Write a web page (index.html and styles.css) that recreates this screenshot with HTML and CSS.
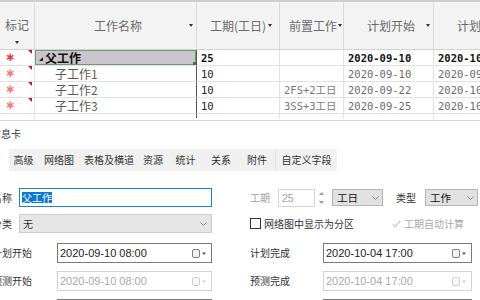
FILE: index.html
```html
<!DOCTYPE html>
<html lang="zh-CN">
<head>
<meta charset="utf-8">
<title>工作信息卡</title>
<link rel="stylesheet" href="styles.css">
</head>
<body>
<div class="app">
  <div class="topband"></div>
  <div class="grid">
    <div class="hrow">
      <div class="hc hc-mark"><span class="ht">标记</span><i class="arr"></i></div>
      <div class="hc hc-c"><span class="ht">工作名称</span><i class="arr"></i></div>
      <div class="hc hc-l hc-dur"><span class="ht">工期(工日)</span><i class="arr"></i></div>
      <div class="hc hc-l hc-pre"><span class="ht">前置工作</span><i class="arr"></i></div>
      <div class="hc hc-c"><span class="ht">计划开始</span><i class="arr"></i></div>
      <div class="hc hc-c"><span class="ht">计划完成</span><i class="arr"></i></div>
    </div>
    <div class="row parent">
      <div class="c mark"><span class="star">∗</span><i class="flag"></i></div>
      <div class="c name selected"><i class="twisty"></i><span>父工作</span><i class="handle"></i></div>
      <div class="c num dur">25</div>
      <div class="c num pre"></div>
      <div class="c num">2020-09-10</div>
      <div class="c num">2020-10-04</div>
    </div>
    <div class="row child">
      <div class="c mark"><span class="star">∗</span><i class="flag"></i></div>
      <div class="c name"><span>子工作1</span></div>
      <div class="c num dur">10</div>
      <div class="c num pre"></div>
      <div class="c num">2020-09-10</div>
      <div class="c num">2020-09-19</div>
    </div>
    <div class="row child">
      <div class="c mark"><span class="star">∗</span><i class="flag"></i></div>
      <div class="c name"><span>子工作2</span></div>
      <div class="c num dur">10</div>
      <div class="c num pre">2FS+2工日</div>
      <div class="c num">2020-09-22</div>
      <div class="c num">2020-10-01</div>
    </div>
    <div class="row child">
      <div class="c mark"><span class="star">∗</span><i class="flag"></i></div>
      <div class="c name"><span>子工作3</span></div>
      <div class="c num dur">10</div>
      <div class="c num pre">3SS+3工日</div>
      <div class="c num">2020-09-25</div>
      <div class="c num">2020-10-04</div>
    </div>
    <div class="row stub">
      <div class="c"></div><div class="c name"></div><div class="c"></div><div class="c"></div><div class="c"></div><div class="c"></div>
    </div>
  </div>

  <div class="panel">
    <div class="inner">
      <div class="ptitle">信息卡</div>
      <div class="tabs">
        <span class="tab">高级</span>
        <span class="tab">网络图</span>
        <span class="tab">表格及横道</span>
        <span class="tab">资源</span>
        <span class="tab">统计</span>
        <span class="tab">关系</span>
        <span class="tab">附件</span>
        <span class="tab">自定义字段</span>
      </div>

      <div class="form">
        <div class="frow r1">
          <div class="lf">
            <span class="lbl lbl-s">名称</span>
            <div class="inp focus w-l"><span class="hl">父工作</span></div>
          </div>
          <div class="rt">
            <span class="lbl lbl-dis lbl-dur">工期</span>
            <div class="spin"><span class="spin-val">25</span></div>
            <div class="spinbtn">
              <svg width="5" height="14" viewBox="0 0 5 14"><path d="M0 4 L2.5 1 L5 4 Z" fill="#9a9a9a"/><path d="M0 10 L2.5 13 L5 10 Z" fill="#9a9a9a"/></svg>
            </div>
            <div class="dd dd-unit"><span>工日</span><svg class="chev" width="7" height="4" viewBox="0 0 7 4"><polyline points="0.5,0.5 3.5,3.5 6.5,0.5" fill="none" stroke="#8a8a8a" stroke-width="1"/></svg></div>
            <span class="lbl lbl-type">类型</span>
            <div class="dd dd-type"><span>工作</span><svg class="chev" width="7" height="4" viewBox="0 0 7 4"><polyline points="0.5,0.5 3.5,3.5 6.5,0.5" fill="none" stroke="#8a8a8a" stroke-width="1"/></svg></div>
          </div>
        </div>

        <div class="frow r2">
          <div class="lf">
            <span class="lbl lbl-s">分类</span>
            <div class="inp sel w-l"><span>无</span><svg class="chev" width="7" height="4" viewBox="0 0 7 4"><polyline points="0.5,0.5 3.5,3.5 6.5,0.5" fill="none" stroke="#8a8a8a" stroke-width="1"/></svg></div>
          </div>
          <div class="rt">
            <span class="cbox"></span>
            <span class="cb-text">网络图中显示为分区</span>
            <svg class="tick" width="9" height="8" viewBox="0 0 9 8"><polyline points="0.8,4.2 3.3,6.8 8.2,0.8" fill="none" stroke="#c4c4c4" stroke-width="1.1"/></svg>
            <span class="cb-text dis">工期自动计算</span>
          </div>
        </div>

        <div class="frow r3">
          <div class="lf">
            <span class="lbl lbl-m">计划开始</span>
            <div class="inp date w-m"><span class="dval">2020-09-10 08:00</span><svg class="cal" width="15" height="9" viewBox="0 0 15 9"><rect x="0.5" y="0.5" width="7" height="8" rx="1.5" fill="#f2f2f2" stroke="#7d7d7d"/><path d="M10 3.5 L14 3.5 L12 6 Z" fill="#555"/></svg></div>
          </div>
          <div class="rt">
            <span class="lbl lbl-r">计划完成</span>
            <div class="inp date w-r"><span class="dval">2020-10-04 17:00</span><svg class="cal" width="15" height="9" viewBox="0 0 15 9"><rect x="0.5" y="0.5" width="7" height="8" rx="1.5" fill="#f2f2f2" stroke="#7d7d7d"/><path d="M10 3.5 L14 3.5 L12 6 Z" fill="#555"/></svg></div>
          </div>
        </div>

        <div class="frow r4">
          <div class="lf">
            <span class="lbl lbl-m">预测开始</span>
            <div class="inp date disabled w-m"><span class="dval">2020-09-10 08:00</span><svg class="cal" width="15" height="9" viewBox="0 0 15 9"><rect x="0.5" y="0.5" width="7" height="8" rx="1.5" fill="#f7f7f7" stroke="#d0d0d0"/><path d="M10 3.5 L14 3.5 L12 6 Z" fill="#cfcfcf"/></svg></div>
          </div>
          <div class="rt">
            <span class="lbl lbl-r">预测完成</span>
            <div class="inp date disabled w-r"><span class="dval">2020-10-04 17:00</span><svg class="cal" width="15" height="9" viewBox="0 0 15 9"><rect x="0.5" y="0.5" width="7" height="8" rx="1.5" fill="#f7f7f7" stroke="#d0d0d0"/><path d="M10 3.5 L14 3.5 L12 6 Z" fill="#cfcfcf"/></svg></div>
          </div>
        </div>

        <div class="frow r5">
          <div class="lf">
            <span class="lbl lbl-m">实际开始</span>
            <div class="inp date w-m"></div>
          </div>
          <div class="rt">
            <span class="lbl lbl-r">实际完成</span>
            <div class="inp date w-r"></div>
          </div>
        </div>
      </div>
    </div>
  </div>
</div>
</body>
</html>
```

FILE: styles.css
```css
html, body {
  margin: 0;
  padding: 0;
  background: #ffffff;
}

body {
  font-family: "Noto Sans CJK SC", "Noto Sans", sans-serif;
  color: #333;
}

.app {
  width: 480px;
  height: 300px;
  overflow: hidden;
  background: #ffffff;
}

.topband {
  height: 2px;
  background: #cfcfcf;
}

/* ---------- grid ---------- */
.grid {
  width: 524px;
  height: 118px;
  border-bottom: 1px solid #d6d6d6;
  overflow: hidden;
}

.hrow,
.row {
  display: grid;
  grid-template-columns: 35px 162px 83px 64px 90px 90px;
}

.hc {
  height: 48px;
  box-sizing: border-box;
  background: #f3f3f3;
  border-right: 1px solid #dadada;
  border-bottom: 1px solid #d2d2d2;
  display: flex;
  align-items: center;
  font-size: 12px;
  line-height: 14px;
  color: #6a6a6a;
}

.ht {
  white-space: nowrap;
}

.arr {
  display: block;
  width: 0;
  height: 0;
  border-left: 2.5px solid transparent;
  border-right: 2.5px solid transparent;
  border-top: 3px solid #333;
  flex: none;
}

.hc-mark {
  flex-direction: column;
  justify-content: flex-start;
  padding-top: 16px;
}

.hc-mark .arr {
  margin-top: 9px;
}

.hc-c {
  padding-left: 12px;
}

.hc-c .ht {
  flex: 1;
  text-align: center;
}

.hc-c .arr {
  margin-right: 3px;
}

.hc-dur {
  padding-left: 13px;
}

.hc-dur .arr {
  margin-left: 2px;
}

.hc-pre {
  padding-left: 9px;
}

.hc-pre .arr {
  margin-left: 1px;
}

.c {
  position: relative;
  height: 16px;
  box-sizing: border-box;
  border-right: 1px solid #e2e2e2;
  border-bottom: 1px solid #e2e2e2;
  display: flex;
  align-items: center;
  white-space: nowrap;
  overflow: hidden;
}

.c.name {
  border-right-color: #555555;
  font-size: 12px;
  line-height: 15px;
}

.num {
  font-family: "DejaVu Sans Mono", "Noto Sans CJK SC", monospace;
  font-size: 10.5px;
  padding-left: 4px;
  color: #6a6a6a;
}

.num.dur {
  color: #222;
}

.num.pre {
  color: #7a7a7a;
}

.parent .num {
  font-weight: bold;
  color: #111;
}

.parent .c.name {
  font-weight: bold;
  color: #111;
  padding-left: 4px;
}

.child .c.name {
  color: #5a5a5a;
  padding-left: 20px;
}

.mark {
  padding-left: 5px;
}

.star {
  font-family: "DejaVu Sans", sans-serif;
  font-size: 12px;
  font-weight: bold;
  color: #f07a7a;
  line-height: 15px;
}

.parent .star {
  color: #e23b3b;
}

.flag {
  position: absolute;
  top: 0;
  right: 2px;
  width: 0;
  height: 0;
  border-top: 4px solid #c0102a;
  border-left: 4px solid transparent;
}

.selected {
  background: #c9c5ca;
  box-shadow: inset 0 0 0 1px #6d9f6d;
}

.twisty {
  display: block;
  width: 0;
  height: 0;
  border-right: 4px solid #222;
  border-top: 4px solid transparent;
  margin-right: 2px;
  margin-top: 2px;
}

.handle {
  position: absolute;
  right: 0;
  bottom: 0;
  width: 3px;
  height: 3px;
  background: #3d7a3d;
}

.stub .c {
  height: 4px;
  border-bottom: none;
}

/* ---------- info panel ---------- */
.panel {
  height: 181px;
  overflow: hidden;
}

.inner {
  margin-left: -8px;
  font-size: 10px;
  line-height: 14px;
}

.ptitle {
  padding-top: 6px;
  margin-left: -1px;
  color: #333;
  height: 14px;
}

.tabs {
  margin-top: 8px;
  margin-left: 17px;
  height: 22px;
  width: 328px;
  background: #f0f0f0;
  display: flex;
}

.tab {
  display: flex;
  align-items: center;
  justify-content: center;
  color: #333;
  box-sizing: border-box;
}

.tab:nth-child(1) { width: 29px; }
.tab:nth-child(2) { width: 42px; }
.tab:nth-child(3) { width: 58px; }
.tab:nth-child(4) { width: 30px; }
.tab:nth-child(5) { width: 35px; }
.tab:nth-child(6) { width: 36px; }
.tab:nth-child(7) { width: 37px; border-right: 1px solid #e0e0e0; }
.tab:nth-child(8) { width: 61px; }

.frow {
  display: flex;
  align-items: center;
}

.r1 { margin-top: 17px; height: 19px; }
.r2 { margin-top: 7px; height: 19px; }
.r3 { margin-top: 10px; height: 20px; }
.r4 { margin-top: 8px; height: 20px; }
.r5 { margin-top: 8px; height: 20px; }

.lf {
  width: 220px;
  height: 100%;
  display: flex;
  align-items: center;
  flex: none;
}

.rt {
  margin-left: 38px;
  height: 100%;
  display: flex;
  align-items: center;
  flex: none;
}

.lbl {
  flex: none;
  color: #333;
  white-space: nowrap;
}

.lbl-s { width: 27px; }
.lbl-m { width: 65px; }
.lbl-r { width: 73px; }
.lbl-dur { width: 28px; }
.lbl-type { width: 29px; margin-left: 13px; }
.lbl-dis { color: #a0a0a0; }

.inp {
  height: 100%;
  box-sizing: border-box;
  border: 1px solid #7a7a7a;
  background: #fff;
  display: flex;
  align-items: center;
  padding-left: 2px;
  flex: none;
}

.w-l { width: 193px; }
.w-m { width: 155px; }
.w-r { width: 149px; }

.focus {
  border-color: #1b7fd6;
}

.hl {
  background: #0a78d4;
  color: #fff;
  line-height: 11px;
}

.sel {
  background: #e6e6e6;
  border-color: #cccccc;
  padding-left: 3px;
  justify-content: space-between;
  padding-right: 4px;
}

.date {
  justify-content: space-between;
  padding-right: 4px;
}

.dval {
  font-family: "Liberation Sans", "Noto Sans", sans-serif;
  font-size: 11px;
  color: #222;
}

.disabled {
  border-color: #d2d2d2;
}

.disabled .dval {
  color: #a8a8a8;
}

.spin {
  width: 37px;
  height: 18px;
  box-sizing: border-box;
  border: 1px solid #d4d4d4;
  display: flex;
  align-items: center;
  padding-left: 3px;
  flex: none;
}

.spin-val {
  font-family: "Liberation Sans", sans-serif;
  font-size: 10.5px;
  color: #a0a0a0;
}

.spinbtn {
  width: 12px;
  height: 18px;
  display: flex;
  align-items: center;
  justify-content: center;
  flex: none;
}

.dd {
  height: 17px;
  box-sizing: border-box;
  background: #e1e1e1;
  border: 1px solid #b4b4b4;
  display: flex;
  align-items: center;
  justify-content: space-between;
  padding-left: 4px;
  padding-right: 3px;
  color: #111;
  font-size: 10.5px;
  flex: none;
}

.dd-unit { width: 51px; margin-left: 5px; }
.dd-type { width: 53px; }

.chev {
  display: block;
  flex: none;
}

.cbox {
  width: 11px;
  height: 11px;
  box-sizing: border-box;
  border: 1px solid #333;
  background: #fff;
  flex: none;
}

.cb-text {
  margin-left: 3px;
  color: #333;
  white-space: nowrap;
}

.tick {
  margin-left: 38px;
  display: block;
  flex: none;
}

.cb-text.dis {
  color: #a8a8a8;
}
```
